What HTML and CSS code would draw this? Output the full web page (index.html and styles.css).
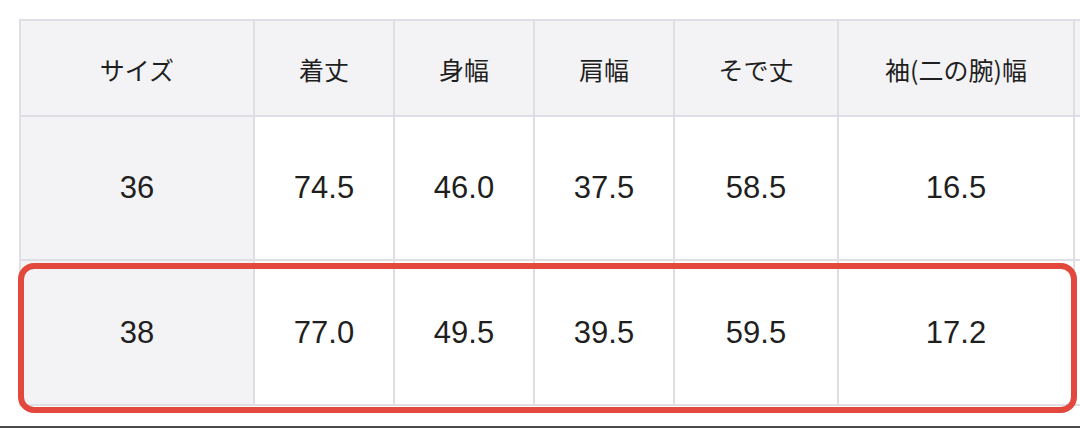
FILE: index.html
```html
<!DOCTYPE html>
<html lang="ja">
<head>
<meta charset="utf-8">
<title>サイズ表</title>
<link rel="stylesheet" href="styles.css">
</head>
<body>
<main class="page">
  <div class="table-wrap">
    <div class="size-table" role="table">
      <div class="cell head side" role="columnheader">サイズ</div>
      <div class="cell head" role="columnheader">着丈</div>
      <div class="cell head" role="columnheader">身幅</div>
      <div class="cell head" role="columnheader">肩幅</div>
      <div class="cell head" role="columnheader">そで丈</div>
      <div class="cell head" role="columnheader">袖(二の腕)幅</div>
      <div class="cell head" role="columnheader"></div>

      <div class="cell num side" role="rowheader">36</div>
      <div class="cell num" role="cell">74.5</div>
      <div class="cell num" role="cell">46.0</div>
      <div class="cell num" role="cell">37.5</div>
      <div class="cell num" role="cell">58.5</div>
      <div class="cell num" role="cell">16.5</div>
      <div class="cell num" role="cell"></div>

      <div class="cell num side" role="rowheader">38</div>
      <div class="cell num" role="cell">77.0</div>
      <div class="cell num" role="cell">49.5</div>
      <div class="cell num" role="cell">39.5</div>
      <div class="cell num" role="cell">59.5</div>
      <div class="cell num" role="cell">17.2</div>
      <div class="cell num" role="cell"></div>
    </div>
    <div class="highlight" aria-hidden="true"></div>
  </div>
  <div class="bottom-line"></div>
</main>
</body>
</html>
```

FILE: styles.css
```css
html, body {
  margin: 0;
  padding: 0;
  background: #ffffff;
}
body {
  width: 1080px;
  height: 428px;
  overflow: hidden;
}
.page {
  padding-top: 19px;
  display: flex;
  flex-direction: column;
}
.table-wrap {
  position: relative;
  margin-left: 19px;
  width: 1300px;
}
.size-table {
  display: grid;
  grid-template-columns: 232px 138px 138px 138px 162px 234px 200px;
  grid-template-rows: 94px 142px 143px;
  gap: 2px;
  padding: 2px;
  background: #dedee5;
  width: max-content;
}
.cell {
  background: #ffffff;
  color: #1f1f1f;
  display: flex;
  align-items: center;
  justify-content: center;
}
.head, .side {
  background: #f3f3f5;
}
.head {
  font-family: "Noto Sans CJK JP", "Liberation Sans", sans-serif;
  font-size: 25px;
  padding-top: 2px;
}
.num {
  font-family: "Liberation Sans", Arial, sans-serif;
  font-size: 31px;
}
.highlight {
  position: absolute;
  left: -1px;
  top: 244px;
  width: 1047px;
  height: 138px;
  border: 6px solid #e2483c;
  border-radius: 16px;
}
.bottom-line {
  margin-top: 20px;
  height: 2px;
  background: #4a4a4a;
  width: 1080px;
}
```
